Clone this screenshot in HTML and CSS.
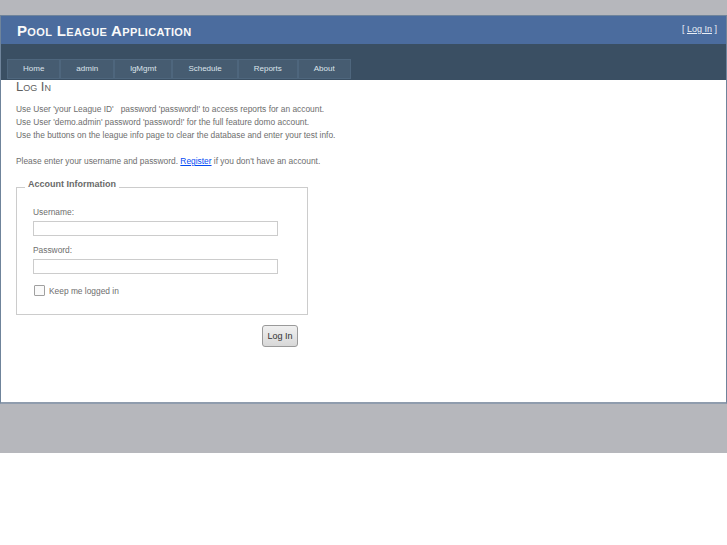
FILE: index.html
```
<!DOCTYPE html>
<html>
<head>
<meta charset="utf-8">
<title>Log In</title>
<link rel="stylesheet" href="styles.css">
</head>
<body>
<div class="page">
  <div class="header">
    <div class="title-row">
      <h1 class="title">Pool League Application</h1>
      <div class="login-display">[ <a href="#">Log In</a> ]</div>
    </div>
    <div class="nav-band">
      <ul class="menu">
        <li><a href="#">Home</a></li>
        <li><a href="#">admin</a></li>
        <li><a href="#">lgMgmt</a></li>
        <li><a href="#">Schedule</a></li>
        <li><a href="#">Reports</a></li>
        <li><a href="#">About</a></li>
      </ul>
    </div>
  </div>
  <div class="main">
    <h2 class="heading">Log In</h2>
    <p class="info">Use User 'your League ID'&nbsp;&nbsp; password 'password!' to access reports for an account.<br>
    Use User 'demo.admin' password 'password!' for the full feature domo account.<br>
    Use the buttons on the league info page to clear the database and enter your test info.</p>
    <p class="info">Please enter your username and password. <a href="#" class="link">Register</a> if you don't have an account.</p>
    <div class="account-info">
      <fieldset class="login-box">
        <legend>Account Information</legend>
        <div class="field">
          <label>Username:</label>
          <input type="text" class="text-entry">
        </div>
        <div class="field">
          <label>Password:</label>
          <input type="password" class="text-entry">
        </div>
        <div class="remember">
          <span class="checkbox"></span>
          <span>Keep me logged in</span>
        </div>
      </fieldset>
      <div class="submit-row">
        <button class="submit-button">Log In</button>
      </div>
    </div>
  </div>
</div>
<div class="footer"></div>
</body>
</html>
```

FILE: styles.css
```
html {
  background: #ffffff;
}
body {
  margin: 0;
  padding: 15px 0 0 0;
  background: #b6b7bc;
  font-family: "Liberation Sans", Arial, sans-serif;
  font-size: 8.4px;
  color: #6e6e6e;
}
.page {
  background: #ffffff;
  border: 1px solid #6f849b;
  border-bottom: 2px solid #8f9cad;
  box-sizing: border-box;
  height: 389px;
}
.header {
  background: #4b6c9e;
}
.title-row {
  display: flex;
  justify-content: space-between;
  align-items: center;
  height: 28px;
}
.title {
  margin: 0;
  padding-left: 16px;
  font-size: 15px;
  font-weight: bold;
  font-variant: small-caps;
  color: #f9f9f9;
  letter-spacing: 0.35px;
}
.login-display {
  padding-right: 9px;
  font-size: 9px;
  color: #e8eef6;
  margin-top: -3px;
}
.login-display a {
  color: #e8eef6;
}
.nav-band {
  background: #3a4f63;
  height: 36px;
  padding: 15px 0 0 6px;
  box-sizing: border-box;
}
.menu {
  list-style: none;
  margin: 0;
  padding: 0;
  display: flex;
  font-size: 8px;
}
.menu a {
  display: block;
  background: #465c71;
  border: 1px solid #4e667d;
  color: #dde4ec;
  text-decoration: none;
  padding: 0 15px;
  line-height: 18px;
  white-space: nowrap;
}
.main {
  padding: 0 15px;
}
.heading {
  margin: 0;
  font-size: 13px;
  font-weight: normal;
  font-variant: small-caps;
  color: #5e5e5e;
  line-height: 14px;
}
.info {
  margin: 9px 0 0 0;
  line-height: 13px;
}
.info + .info {
  margin-top: 13px;
}
.link {
  color: #034af3;
}
.account-info {
  width: 292px;
}
.login-box {
  margin: 11px 0 0 0;
  padding: 11px 16px 18px 16px;
  border: 1px solid #cccccc;
}
.login-box legend {
  font-weight: bold;
  font-size: 9px;
  padding: 0 3px 6px 3px;
  margin-left: -8px;
  color: #696969;
}
.field {
  display: flex;
  flex-direction: column;
  margin-bottom: 8px;
}
.field label {
  line-height: 13px;
  margin-bottom: 2px;
}
.text-entry {
  width: 245px;
  height: 15px;
  box-sizing: border-box;
  border: 1px solid #cccccc;
  margin: 0;
  padding: 0;
}
.remember {
  display: flex;
  align-items: center;
  gap: 4px;
  margin-top: 11px;
  padding-left: 1px;
}
.checkbox {
  display: inline-block;
  width: 9px;
  height: 9px;
  border: 1px solid #a0a0a0;
  border-radius: 1px;
  background: #fafafa;
}
.submit-row {
  display: flex;
  justify-content: flex-end;
  padding-right: 10px;
  margin-top: 10px;
}
.submit-button {
  font-family: "Liberation Sans", Arial, sans-serif;
  font-size: 9px;
  color: #333333;
  background: linear-gradient(#f0f0f0, #d8d8d8);
  border: 1px solid #9a9a9a;
  border-radius: 3px;
  height: 22px;
  width: 36px;
  padding: 0;
}
.footer {
  height: 49px;
}
```
